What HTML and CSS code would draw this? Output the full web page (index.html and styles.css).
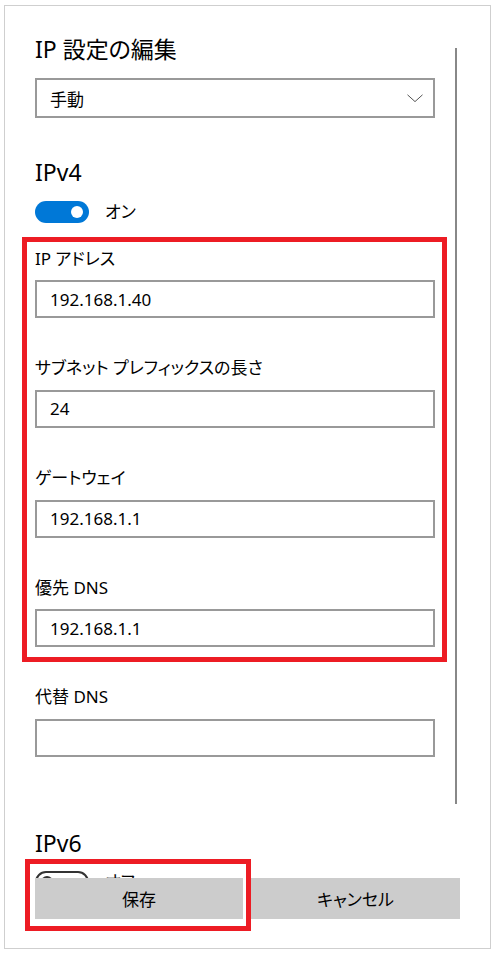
FILE: index.html
```html
<!DOCTYPE html>
<html lang="ja">
<head>
<meta charset="utf-8">
<link rel="stylesheet" href="styles.css">
</head>
<body>
<div class="frame">
  <div class="content">
    <h1 class="title">IP 設定の編集</h1>
    <div class="select">
      <span>手動</span>
      <svg class="chevron" width="16" height="9" viewBox="0 0 16 9"><polyline points="0.5,0.8 8,7.6 15.5,0.8" fill="none" stroke="#555" stroke-width="1"/></svg>
    </div>

    <h2 class="heading">IPv4</h2>
    <div class="toggle-row">
      <span class="toggle on"><span class="knob"></span></span>
      <span class="toggle-label">オン</span>
    </div>

    <div class="highlight">
      <div class="field">
        <div class="label">IP アドレス</div>
        <div class="input">192.168.1.40</div>
      </div>
      <div class="field">
        <div class="label">サブネット プレフィックスの長さ</div>
        <div class="input">24</div>
      </div>
      <div class="field">
        <div class="label">ゲートウェイ</div>
        <div class="input">192.168.1.1</div>
      </div>
      <div class="field last">
        <div class="label">優先 DNS</div>
        <div class="input">192.168.1.1</div>
      </div>
    </div>

    <div class="field alt">
      <div class="label">代替 DNS</div>
      <div class="input"></div>
    </div>

    <h2 class="heading v6">IPv6</h2>
    <div class="toggle-row off-row">
      <span class="toggle off"><span class="knob"></span></span>
      <span class="toggle-label">オフ</span>
    </div>
  </div>

  <div class="scrollbar"></div>

  <div class="footer">
    <button class="btn">保存</button>
    <button class="btn">キャンセル</button>
    <div class="mark"></div>
  </div>
</div>
</body>
</html>
```

FILE: styles.css
```css
* { box-sizing: border-box; }

html, body {
  margin: 0;
  padding: 0;
  background: #fff;
}

body {
  font-family: "Noto Sans", "Noto Sans CJK JP", sans-serif;
  font-feature-settings: "palt";
  color: #000;
}

.frame {
  position: relative;
  margin: 5px 0 0 4px;
  width: 487px;
  height: 944px;
  border: 1px solid #cfcfcf;
  overflow: hidden;
}

.content {
  padding: 27.5px 0 0 30px;
  width: 430px;
}

.title {
  margin: 0 0 14.5px;
  font-size: 23px;
  line-height: 30px;
  font-weight: 400;
}

.select {
  height: 40px;
  width: 400px;
  border: 2px solid #999;
  display: flex;
  align-items: center;
  justify-content: space-between;
  padding: 0 10px 0 13px;
  font-size: 17px;
}

.chevron { display: block; }

.heading {
  margin: 38.5px 0 0;
  font-size: 23px;
  line-height: 30px;
  font-weight: 400;
}

.toggle-row {
  display: flex;
  align-items: center;
  gap: 16px;
  margin-top: 14.5px;
  height: 22px;
}

.toggle {
  width: 54px;
  height: 22px;
  border-radius: 11px;
  display: flex;
  align-items: center;
  flex: none;
}

.toggle.on {
  background: #0078d7;
  justify-content: flex-end;
  padding-right: 6px;
}

.toggle.on .knob {
  width: 12px;
  height: 12px;
  border-radius: 50%;
  background: #fff;
}

.toggle.off {
  border: 2px solid #333;
  padding-left: 4px;
}

.toggle.off .knob {
  width: 12px;
  height: 12px;
  border-radius: 50%;
  background: #333;
}

.toggle-label {
  font-size: 17px;
  line-height: 22px;
}

.highlight {
  margin: 14px -12px 0 -13px;
  border: 5px solid #ed1c24;
  padding: 4.5px 7px 10px 8px;
}

.field {
  width: 400px;
  margin-bottom: 38.3px;
}

.field.last { margin-bottom: 0; }

.field.alt { margin-top: 23px; margin-bottom: 0; }

.label {
  font-size: 17px;
  line-height: 24px;
  margin-bottom: 9.5px;
}

.input {
  height: 38px;
  border: 2px solid #999;
  padding: 0 13px;
  display: flex;
  align-items: center;
  font-size: 17px;
}

.heading.v6 { margin-top: 71.5px; }

.off-row { margin-top: 12.5px; }

.scrollbar {
  position: absolute;
  left: 450px;
  top: 42px;
  width: 2px;
  height: 756px;
  background: #888;
}

.footer {
  position: absolute;
  left: 0;
  right: 0;
  top: 872px;
  bottom: 0;
  background: #fff;
  display: flex;
  align-items: flex-start;
  gap: 8px;
  padding-left: 30px;
}

.btn {
  height: 41px;
  width: 208px;
  border: 0;
  background: #ccc;
  font-family: inherit;
  font-feature-settings: "palt";
  font-size: 17px;
  color: #000;
  padding: 0;
}

.btn + .btn { width: 209px; }

.mark {
  position: absolute;
  left: 20px;
  top: -19px;
  width: 226px;
  height: 72px;
  border: 5px solid #ed1c24;
}
```
